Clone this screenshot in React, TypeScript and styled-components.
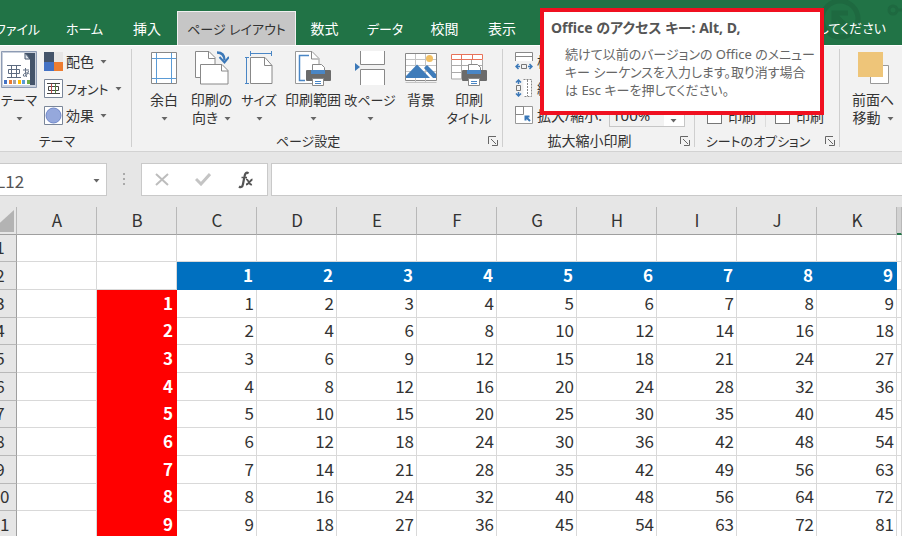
import React from "react";
import styled, { createGlobalStyle, css } from "styled-components";

const uiFont = `"Noto Sans", "Noto Sans CJK JP", sans-serif`;
const sheetFont = `"Noto Sans CJK JP", sans-serif`;

const GlobalStyle = createGlobalStyle`
  * { box-sizing: border-box; }
  body {
    margin: 0;
    overflow: hidden;
    background: #fff;
    color: #333;
    font-family: ${uiFont};
    font-size: 14px;
    font-feature-settings: "palt";
  }
  button, input { font: inherit; font-feature-settings: inherit; color: inherit; }
  button { border: 0; padding: 0; background: transparent; }
`;

/* The window is scrolled slightly past its left edge. */
const Window = styled.div`
  position: relative;
  display: flex;
  flex-direction: column;
  height: 100vh;
  margin-left: -17px;
  overflow: hidden;
  white-space: nowrap;
`;

const TitleBar = styled.header`
  position: relative;
  display: flex;
  align-items: flex-end;
  padding-top: 11px;
  background: #217346;
  color: #fff;
`;

const TabList = styled.nav`
  display: flex;
`;

const Tab = styled.button<{ $w: number; $active?: boolean; $compact?: boolean }>`
  width: ${(p) => p.$w}px;
  height: 34px;
  line-height: 32px;
  font-size: ${(p) => (p.$compact ? 13 : 14)}px;
  border: 1px solid transparent;
  border-bottom: 0;
  ${(p) =>
    p.$active &&
    css`
      background: #c6c6c6;
      border-color: #f0f0f0;
      color: #333;
    `}
`;

const TellMe = styled.span`
  position: relative;
  margin-left: auto;
  margin-right: 16px;
  font-size: 13px;
  line-height: 34px;
`;

const Pattern = styled.svg`
  position: absolute;
  right: 0;
  top: 0;
`;

const Ribbon = styled.section`
  display: flex;
  padding: 3px 0 4px;
  background: #f2f2f2;
  border-top: 1px solid #fff;
  border-bottom: 1px solid #d2d2d2;
`;

const Group = styled.div<{ $w: number }>`
  display: flex;
  flex-direction: column;
  flex: none;
  width: ${(p) => p.$w}px;
  height: 98px;
  border-right: 1px solid #cfcfcf;
`;

const GroupBody = styled.div<{ $pad: number; $gap?: number }>`
  display: flex;
  height: 86px;
  gap: ${(p) => p.$gap ?? 0}px;
  padding-left: ${(p) => p.$pad}px;
`;

const GroupFoot = styled.div<{ $compact?: boolean }>`
  display: flex;
  align-items: center;
  height: 12px;
  line-height: 12px;
  font-size: ${(p) => (p.$compact ? 13 : 14)}px;
  text-align: center;
`;

const FootLabel = styled.span`
  flex: 1;
`;

const Launcher = styled.button`
  display: flex;
  justify-content: center;
  width: 18px;
`;

const BigButton = styled.button<{ $w: number }>`
  display: flex;
  flex-direction: column;
  align-items: center;
  flex: none;
  width: ${(p) => p.$w}px;
  line-height: 18px;
`;

const IconSlot = styled.span`
  display: flex;
  height: 42px;
  padding-top: 2px;
  align-items: flex-start;
`;

const KanaLabel = styled.span`
  font-size: 13px;
`;

const SecondLine = styled.span`
  display: flex;
  align-items: center;
  gap: 6px;
  height: 18px;
`;

const Stack = styled.div`
  display: flex;
  flex-direction: column;
  gap: 7px;
  padding-top: 2px;
`;

const SmallButton = styled.button`
  display: flex;
  align-items: center;
  gap: 3px;
  height: 20px;
  > svg:last-child { margin-left: 3px; }
`;

const Field = styled.label`
  display: flex;
  align-items: center;
  gap: 4px;
  height: 20px;
`;

const Spinner = styled.span`
  display: flex;
  align-items: center;
  width: 76px;
  height: 24px;
  margin-left: 3px;
  border: 1px solid #c6c6c6;
  background: #fff;
`;

const SpinnerInput = styled.input`
  width: 54px;
  height: 22px;
  padding: 0 2px;
  border: 0;
  background: #f2f2f2;
  font-size: 15px;
`;

const SpinnerButton = styled.button`
  display: flex;
  flex: 1;
  justify-content: center;
  padding-top: 10px;
`;

const Checks = styled.div`
  display: flex;
  align-items: flex-end;
  gap: 9px;
  height: 78px;
`;

const Check = styled.label`
  display: flex;
  align-items: center;
  gap: 6px;
  height: 22px;
  & + & {
    padding-left: 9px;
    border-left: 1px solid #dcdcdc;
  }
`;

const CheckBox = styled.input`
  appearance: none;
  width: 15px;
  height: 15px;
  margin: 0;
  border: 1px solid #777;
  background: #fff;
`;

const FormulaBar = styled.section`
  display: flex;
  padding: 11px 0;
  background: #e6e6e6;
`;

const NameBox = styled.div`
  display: flex;
  align-items: center;
  width: 124px;
  height: 33px;
  padding-right: 6px;
  border: 1px solid #c9c9c9;
  background: #fff;
`;

const NameInput = styled.input`
  flex: 1;
  min-width: 0;
  padding: 2px 0 0 12px;
  border: 0;
  background: transparent;
  color: #555;
  font-family: ${sheetFont};
  font-size: 17px;
  line-height: 22px;
`;

const Dots = styled.svg`
  flex: none;
  margin: 9px 15px 0;
`;

const FormulaTools = styled.div`
  display: flex;
  align-items: center;
  justify-content: space-around;
  width: 127px;
  height: 33px;
  border: 1px solid #c9c9c9;
  background: #fff;
`;

const ToolButton = styled.button`
  display: flex;
`;

const FormulaInput = styled.input`
  flex: 1;
  height: 33px;
  margin-left: 3px;
  border: 1px solid #c9c9c9;
  border-right: 0;
  background: #fff;
`;

const Sheet = styled.table`
  flex: none;
  width: 100%;
  table-layout: fixed;
  border-collapse: separate;
  border-spacing: 0;
  font-family: ${sheetFont};
  font-size: 17px;
  line-height: 24px;
`;

const CornerCol = styled.col`
  width: 34px;
`;

const Col = styled.col`
  width: 80px;
`;

const HeadCell = styled.th<{ $selected?: boolean }>`
  height: 28px;
  padding: 0 0 2px 1px;
  font-weight: 400;
  background: ${(p) => (p.$selected ? "#d2d2d2" : "#e6e6e6")};
  border-right: 1px solid #b8b8b8;
  border-bottom: ${(p) => (p.$selected ? "2px solid #217346" : "1px solid #9f9f9f")};
`;

const Corner = styled(HeadCell)`
  vertical-align: bottom;
  padding: 0;
  svg { display: block; margin: 0 2px 2px auto; }
`;

const Row = styled.tr`
  height: 28px;
  &:nth-child(3n + 1) { height: 27px; }
`;

const RowHead = styled.th`
  padding: 0 0 2px 1px;
  font-weight: 400;
  background: #e6e6e6;
  border-right: 1px solid #9f9f9f;
  border-bottom: 1px solid #b8b8b8;
`;

const tones = { plain: "#fff", blue: "#0070c0", red: "#ff0000" };

const Cell = styled.td<{ $tone: keyof typeof tones }>`
  padding: 0 2px 2px 0;
  text-align: right;
  background: ${(p) => tones[p.$tone]};
  border: 0 solid ${(p) => (p.$tone === "plain" ? "#d9d9d9" : tones[p.$tone])};
  border-width: 0 1px 1px 0;
  ${(p) =>
    p.$tone !== "plain" &&
    css`
      padding-right: 3px;
      color: #fff;
      font-weight: 700;
    `}
`;

const KeyTip = styled.aside`
  position: absolute;
  left: 557px;
  top: 8px;
  width: 284px;
  height: 107px;
  padding: 7px 6px 0 7px;
  border: 4px solid #f01020;
  background: #fff;
  color: #666;
  line-height: 18px;
`;

const KeyTipTitle = styled.strong`
  display: block;
  margin-bottom: 8px;
  color: #555;
`;

const KeyTipText = styled.p`
  margin: 0 0 0 14px;
  font-size: 13px;
`;

const Arrow = () => (
  <svg width="7" height="6" viewBox="0 0 7 6" aria-hidden="true">
    <path d="M0.5 2h6L3.5 5.5z" fill="#666" />
  </svg>
);

const LauncherIcon = () => (
  <svg width="10" height="10" viewBox="0 0 10 10" fill="none" stroke="#666">
    <path d="M0.5 8V0.5H8M3 3l5 5M9.5 4v5.5H4" />
  </svg>
);

const ThemeIcon = () => (
  <svg width="36" height="37" viewBox="0 0 36 37">
    <path d="M0.5 0.5h35v36H0.5z" fill="#c9d0dc" stroke="#8d9bb3" />
    <path d="M24 2h10v32h-5V8z" fill="#44546a" />
    <path d="M2 2h22l5 6v26H2z" fill="#fff" />
    <path d="M24 2v6h5z" fill="#dfe4ec" stroke="#44546a" />
    <path d="M6 14.5h14M6 26.500h14M10.500 15v11M15.500 15v11M7.500 18.500h11v4h-11z" fill="none" stroke="#5d6b80" />
    <path d="M22 19h6M24.500 17c0 4 0 6 1 9M27.500 20c-1 4-4 6-5 5-1-3 4-4 6-2" fill="none" stroke="#5d6b80" />
    <path d="M3 29h3v4H3z" fill="#4472c4" />
    <path d="M8 29h3v4H8z" fill="#ed7d31" />
    <path d="M12 29h3v4h-3z" fill="#a5a5a5" />
    <path d="M17 29h3v4h-3z" fill="#ffc000" />
    <path d="M21 29h3v4h-3z" fill="#5b9bd5" />
    <path d="M26 29h3v4h-3z" fill="#70ad47" />
  </svg>
);

const ColorsIcon = () => (
  <svg width="19" height="19" viewBox="0 0 19 19">
    <path d="M0 0h10v10H0z" fill="#44546a" />
    <path d="M10 0h9v10h-9z" fill="#e7e6e6" />
    <path d="M0 10h10v9H0z" fill="#4472c4" />
    <path d="M10 10h9v9h-9z" fill="#ed7d31" />
  </svg>
);

const FontsIcon = () => (
  <svg width="19" height="19" viewBox="0 0 19 19" fill="none">
    <path d="M0.5 0.5h18v18H0.5z" fill="#fff" stroke="#7a8699" />
    <path d="M3 4.5h13M3 14.5h13M4.5 7.5h10v4h-10z" stroke="#444" />
    <path d="M7.5 5v9" stroke="#c0504d" />
    <path d="M11.5 5v9" stroke="#5a8a3a" />
  </svg>
);

const EffectsIcon = () => (
  <svg width="19" height="19" viewBox="0 0 19 19">
    <path d="M0.5 0.5h18v18H0.5z" fill="#fff" stroke="#7a8699" />
    <circle cx="9.5" cy="9.5" r="7.5" fill="#95a8dc" stroke="#6f87c9" />
  </svg>
);

const MarginsIcon = () => (
  <svg width="26" height="34" viewBox="0 0 26 34" fill="none">
    <path d="M0.5 1.5h25v31H0.5z" fill="#fff" stroke="#888" />
    <path d="M5.5 2v30M20.5 2v30M1 7.5h24M1 27.5h24" stroke="#5b9bd5" />
  </svg>
);

const OrientationIcon = () => (
  <svg width="34" height="34" viewBox="0 0 34 34" fill="none">
    <path d="M0.5 26.5V0.5H14l6 6v20z" fill="#fff" stroke="#888" />
    <path d="M13.5 0.5v7h6.5" stroke="#888" />
    <path d="M5.5 13.5H27l6 6v13.500H5.500z" fill="#fff" stroke="#888" />
    <path d="M26.500 13.500v6.500h6.500" stroke="#888" />
    <path d="M22 1.500c5.500 0 7.500 3 7.500 8" stroke="#3b78b8" strokeWidth="2.500" />
    <path d="M24.500 6l5 5.500 4.500-5.500" stroke="#3b78b8" strokeWidth="2" />
  </svg>
);

const SizeIcon = () => (
  <svg width="28" height="34" viewBox="0 0 28 34" fill="none">
    <path d="M5.500 6.500H20l7 8v18H5.500z" fill="#fff" stroke="#888" />
    <path d="M19.500 6.500v8H27" stroke="#888" />
    <path d="M5.500 2.500h21M5.500 0v5M26.500 0v5M1.500 6.500v26M0 6.500h4M0 32.500h4" stroke="#4a86c5" />
  </svg>
);

const Printer = () => (
  <>
    <path d="M17.500 21v-7.500h9l3 3V21z" fill="#fff" stroke="#888" />
    <path d="M12 19h23a1 1 0 011 1v9a1 1 0 01-1 1H12a1 1 0 01-1-1v-9a1 1 0 011-1z" fill="#6b6b6b" />
    <path d="M16 19h14v4H16z" fill="#4a86c5" />
    <path d="M17.500 27.500h11v7h-11z" fill="#fff" stroke="#888" />
    <path d="M20 30.500h6M20 32.500h6" stroke="#4a86c5" />
  </>
);

const AreaIcon = () => (
  <svg width="36" height="35" viewBox="0 0 36 35" fill="none">
    <path d="M0.500 32.500v-32H17l7 7v25z" fill="#fff" stroke="#999" />
    <path d="M16.500 0.500v7.500h7" stroke="#888" />
    <path d="M14 4.500H4.500v25H10" stroke="#4a86c5" strokeWidth="1.500" />
    <Printer />
  </svg>
);

const BreaksIcon = () => (
  <svg width="30" height="34" viewBox="0 0 30 34">
    <path d="M5 0h25v14H5zM5 18h25v16H5z" fill="#fff" />
    <path d="M5.500 0v13.500h24V0M5.500 34V18.500h24V34" fill="none" stroke="#888" />
    <path d="M0 12l5 4-5 4z" fill="#3b78b8" />
  </svg>
);

const BackgroundIcon = () => (
  <svg width="32" height="34" viewBox="0 0 32 34" fill="none">
    <path d="M0.500 2.500h31v27H0.500z" fill="#fff" stroke="#888" />
    <path d="M1 8.500h30M1 14.500h30M1 20.500h30M10.500 3v28M20.500 3v28M0.500 31.500h31" stroke="#c4c4c4" />
    <circle cx="24.500" cy="7.500" r="3.500" fill="#f2c063" />
    <path d="M1 27v-2L12 13.500 25 27z" fill="#3f7cba" />
    <path d="M19 17l3-3 9 9v4h-3z" fill="#3f7cba" />
  </svg>
);

const TitlesIcon = () => (
  <svg width="36" height="35" viewBox="0 0 36 35" fill="none">
    <path d="M0.500 8.500h31v19H0.500z" fill="#fff" />
    <path d="M0.500 9v19H15M0.500 14.500h31M0.500 21.500H15M10.500 9v19M20.500 9v10M31.500 9v11" stroke="#aaa" />
    <path d="M0.500 3.500h31v5H0.500zM10.500 3.500v5M21.500 3.500v5" fill="#fff" stroke="#e8735a" />
    <Printer />
  </svg>
);

const FitWidthIcon = () => (
  <svg width="18" height="18" viewBox="0 0 18 18" fill="none">
    <path d="M0.500 9V0.500h17V9M1 4.500h16" fill="#fff" stroke="#888" />
    <path d="M6.500 12.500h5v4h-5z" stroke="#777" />
    <path d="M5 14.500H1M3.500 12L1 14.500 3.500 17M13 14.500h4M14.500 12l2.500 2.500-2.500 2.500" stroke="#3b78b8" strokeWidth="1.500" />
  </svg>
);

const FitHeightIcon = () => (
  <svg width="18" height="18" viewBox="0 0 18 18" fill="none">
    <path d="M8.500 0.500h8v17h-8M12.500 1v16" fill="#fff" stroke="#888" strokeDasharray="2 1" />
    <path d="M1.500 6.500h4v5h-4z" stroke="#777" />
    <path d="M3.500 5V1M1 3.500L3.500 1 6 3.500M3.500 13v4M1 14.500L3.500 17 6 14.500" stroke="#3b78b8" strokeWidth="1.500" />
  </svg>
);

const ScaleIcon = () => (
  <svg width="18" height="18" viewBox="0 0 18 18" fill="none">
    <path d="M0.500 0.500h17v17H0.500z" fill="#fff" stroke="#999" />
    <path d="M0.500 0.500h8v8h-8z" stroke="#888" />
    <path d="M15 15l-4.500-4.500M10.500 14.500v-4h4" stroke="#3b78b8" strokeWidth="2" />
  </svg>
);

const BringForwardIcon = () => (
  <svg width="31" height="34" viewBox="0 0 31 34">
    <path d="M12.500 14.500h18v18h-18z" fill="#fff" stroke="#999" />
    <path d="M0 1h25v25H0z" fill="#eec579" />
  </svg>
);

type Tool = {
  icon: React.ReactNode;
  label: React.ReactNode;
  second?: React.ReactNode;
  arrow?: boolean;
  w: number;
};

const pageTools: Tool[] = [
  { icon: <MarginsIcon />, label: "余白", arrow: true, w: 48 },
  { icon: <OrientationIcon />, label: "印刷の", second: "向き", arrow: true, w: 47 },
  { icon: <SizeIcon />, label: <KanaLabel>サイズ</KanaLabel>, arrow: true, w: 48 },
  { icon: <AreaIcon />, label: "印刷範囲", arrow: true, w: 60 },
  { icon: <BreaksIcon />, label: <KanaLabel>改ページ</KanaLabel>, arrow: true, w: 54 },
  { icon: <BackgroundIcon />, label: "背景", w: 48 },
  { icon: <TitlesIcon />, label: "印刷", second: <KanaLabel>タイトル</KanaLabel>, w: 48 },
];

const tabs = [
  { label: "ファイル", w: 69, compact: true },
  { label: "ホーム", w: 65, compact: true },
  { label: "挿入", w: 60 },
  { label: "ページ レイアウト", w: 119, active: true, compact: true },
  { label: "数式", w: 57 },
  { label: "データ", w: 64, compact: true },
  { label: "校閲", w: 55 },
  { label: "表示", w: 60 },
];

const columns = ["A", "B", "C", "D", "E", "F", "G", "H", "I", "J", "K"];
const rows = Array.from({ length: 11 }, (_, i) => i + 1);

function cellAt(row: number, col: number): { value: number | ""; tone: keyof typeof tones } {
  const a = row - 2;
  const b = col - 1;
  if (a === 0 && b > 0) return { value: b, tone: "blue" };
  if (b === 0 && a > 0) return { value: a, tone: "red" };
  if (a > 0 && b > 0) return { value: a * b, tone: "plain" };
  return { value: "", tone: "plain" };
}

const ToolItem = ({ icon, label, second, arrow, w }: Tool) => (
  <BigButton $w={w}>
    <IconSlot>{icon}</IconSlot>
    <span>{label}</span>
    <SecondLine>
      {second && <span>{second}</span>}
      {arrow && <Arrow />}
    </SecondLine>
  </BigButton>
);

type FootProps = { label: string; launcher?: boolean; compact?: boolean };

const Foot = ({ label, launcher, compact }: FootProps) => (
  <GroupFoot $compact={compact}>
    <FootLabel>{label}</FootLabel>
    {launcher && (
      <Launcher aria-label={`${label}の詳細`}>
        <LauncherIcon />
      </Launcher>
    )}
  </GroupFoot>
);

export default function App() {
  return (
    <>
      <GlobalStyle />
      <Window>
        <TitleBar>
          <Pattern width="90" height="45" viewBox="0 0 90 45" fill="none" stroke="#1e6940">
            <circle cx="28" cy="19" r="18" strokeWidth="5" />
            <path d="M37 29L23 15M22 26V13h14" strokeWidth="5" />
            <circle cx="81" cy="10" r="4" strokeWidth="3" />
            <path d="M85 10h5" strokeWidth="3" />
          </Pattern>
          <TabList>
            {tabs.map((t) => (
              <Tab key={t.label} $w={t.w} $active={t.active} $compact={t.compact}>
                {t.label}
              </Tab>
            ))}
          </TabList>
          <TellMe>してください</TellMe>
        </TitleBar>

        <Ribbon>
          <Group $w={149}>
            <GroupBody $pad={17} $gap={6}>
              <ToolItem icon={<ThemeIcon />} label={<KanaLabel>テーマ</KanaLabel>} arrow w={38} />
              <Stack>
                <SmallButton><ColorsIcon />配色<Arrow /></SmallButton>
                <SmallButton><FontsIcon /><KanaLabel>フォント</KanaLabel><Arrow /></SmallButton>
                <SmallButton><EffectsIcon />効果<Arrow /></SmallButton>
              </Stack>
            </GroupBody>
            <Foot label="テーマ" compact />
          </Group>

          <Group $w={371}>
            <GroupBody $pad={8}>
              {pageTools.map((t, i) => (
                <ToolItem key={i} {...t} />
              ))}
            </GroupBody>
            <Foot label="ページ設定" launcher compact />
          </Group>

          <Group $w={192}>
            <GroupBody $pad={12}>
              <Stack>
                <Field><FitWidthIcon />横:</Field>
                <Field><FitHeightIcon />縦:</Field>
                <Field>
                  <ScaleIcon />
                  拡大/縮小:
                  <Spinner>
                    <SpinnerInput defaultValue="100%" />
                    <SpinnerButton aria-label="縮小"><Arrow /></SpinnerButton>
                  </Spinner>
                </Field>
              </Stack>
            </GroupBody>
            <Foot label="拡大縮小印刷" launcher />
          </Group>

          <Group $w={145}>
            <GroupBody $pad={12}>
              <Checks>
                <Check><CheckBox type="checkbox" />印刷</Check>
                <Check><CheckBox type="checkbox" />印刷</Check>
              </Checks>
            </GroupBody>
            <Foot label="シートのオプション" launcher compact />
          </Group>

          <Group $w={120}>
            <GroupBody $pad={9}>
              <ToolItem icon={<BringForwardIcon />} label="前面へ" second="移動" arrow w={48} />
            </GroupBody>
          </Group>
        </Ribbon>

        <FormulaBar>
          <NameBox>
            <NameInput aria-label="名前ボックス" defaultValue="L12" />
            <Arrow />
          </NameBox>
          <Dots width="4" height="14" viewBox="0 0 4 14" fill="#aaa">
            <path d="M1 1h2v2H1zM1 6h2v2H1zM1 11h2v2H1z" />
          </Dots>
          <FormulaTools>
            <ToolButton aria-label="キャンセル">
              <svg width="14" height="13" viewBox="0 0 14 13" fill="none" stroke="#bdbdbd" strokeWidth="2">
                <path d="M1 1l12 11M13 1L1 12" />
              </svg>
            </ToolButton>
            <ToolButton aria-label="入力">
              <svg width="16" height="13" viewBox="0 0 16 13" fill="none" stroke="#c4c4c4" strokeWidth="3">
                <path d="M1 6l5 5L15 1" />
              </svg>
            </ToolButton>
            <ToolButton aria-label="関数の挿入">
              <svg width="16" height="18" viewBox="0 0 16 18" fill="none" stroke="#555">
                <path d="M10.500 2.500c-2-2-3.500 0-4 3L5 13c-.5 3-2 4-4 2.500" strokeWidth="2.200" />
                <path d="M3.500 6.500H9" strokeWidth="1.500" />
                <path d="M8 8.500c3-1 2 6 6 5M14.500 8.500c-2 0-3.500 5-6.500 5" strokeWidth="1.800" />
              </svg>
            </ToolButton>
          </FormulaTools>
          <FormulaInput aria-label="数式バー" />
        </FormulaBar>

        <Sheet>
          <colgroup>
            <CornerCol />
            {columns.map((c) => <Col key={c} />)}
            <col />
          </colgroup>
          <thead>
            <tr>
              <Corner>
                <svg width="24" height="22" viewBox="0 0 24 22">
                  <path d="M24 0v22H0z" fill="#b3b3b3" />
                </svg>
              </Corner>
              {columns.map((c) => <HeadCell key={c} scope="col">{c}</HeadCell>)}
              <HeadCell $selected />
            </tr>
          </thead>
          <tbody>
            {rows.map((r) => (
              <Row key={r}>
                <RowHead scope="row">{r}</RowHead>
                {columns.map((c, i) => {
                  const { value, tone } = cellAt(r, i);
                  return <Cell key={c} $tone={tone}>{value}</Cell>;
                })}
                <Cell $tone="plain" />
              </Row>
            ))}
          </tbody>
        </Sheet>

        <KeyTip role="tooltip">
          <KeyTipTitle>Office のアクセス キー: Alt, D,</KeyTipTitle>
          <KeyTipText>
            続けて以前のバージョンの Office のメニュー
            <br />
            キー シーケンスを入力します。取り消す場合
            <br />
            は Esc キーを押してください。
          </KeyTipText>
        </KeyTip>
      </Window>
    </>
  );
}
